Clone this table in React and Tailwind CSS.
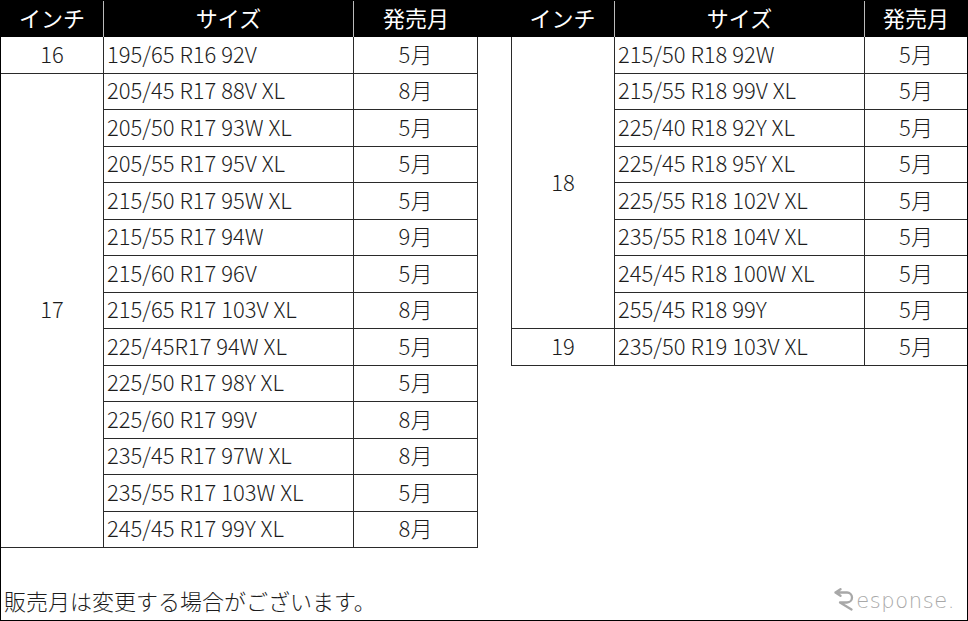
import React from 'react';

const leftRows = [
  ['195/65 R16 92V', '5月'],
  ['205/45 R17 88V XL', '8月'],
  ['205/50 R17 93W XL', '5月'],
  ['205/55 R17 95V XL', '5月'],
  ['215/50 R17 95W XL', '5月'],
  ['215/55 R17 94W', '9月'],
  ['215/60 R17 96V', '5月'],
  ['215/65 R17 103V XL', '8月'],
  ['225/45R17 94W XL', '5月'],
  ['225/50 R17 98Y XL', '5月'],
  ['225/60 R17 99V', '8月'],
  ['235/45 R17 97W XL', '8月'],
  ['235/55 R17 103W XL', '5月'],
  ['245/45 R17 99Y XL', '8月'],
];

const rightRows = [
  ['215/50 R18 92W', '5月'],
  ['215/55 R18 99V XL', '5月'],
  ['225/40 R18 92Y XL', '5月'],
  ['225/45 R18 95Y XL', '5月'],
  ['225/55 R18 102V XL', '5月'],
  ['235/55 R18 104V XL', '5月'],
  ['245/45 R18 100W XL', '5月'],
  ['255/45 R18 99Y', '5月'],
  ['235/50 R19 103V XL', '5月'],
];

const cell = 'border-r border-b border-[#2a2a2a] flex items-center pb-[4px]';
const head = 'bg-black text-white flex items-center justify-center font-normal pb-[4px]';

function ResponseLogo() {
  return (
    <div className="flex items-end text-[#a8a8a8] mr-[12px] mb-[8px]">
      <svg width="22" height="23" viewBox="0 0 22 23" className="mb-[1px]">
        <path d="M1.5 4.5 L6.5 1.2 M1.5 4.5 L6.5 7.8 M1.5 4.5 H13 A5 5 0 0 1 13 14.5 H6 L17.5 21.5" fill="none" stroke="#a8a8a8" strokeWidth="2.3" strokeLinecap="round" strokeLinejoin="round" />
      </svg>
      <span className="text-[21px] leading-none tracking-[0.6px]" style={{ fontFamily: '"DejaVu Sans", sans-serif', fontWeight: 300 }}>esponse.</span>
    </div>
  );
}

export default function App() {
  return (
    <div
      className="w-[968px] h-[621px] bg-white border border-black flex flex-col text-[22px] text-[#1c1c1c] leading-none font-light"
      style={{ fontFamily: '"Noto Sans CJK JP", "Noto Sans", sans-serif' }}
    >
      <div className="flex">
        {/* left table */}
        <div className="w-[477px] grid grid-cols-[103px_250px_124px] grid-rows-[36px_repeat(14,36.5px)]">
          <div className={`${head} border-r border-[#bbbbbb]`}>インチ</div>
          <div className={`${head} border-r border-[#bbbbbb]`}>サイズ</div>
          <div className={head}>発売月</div>
          <div className={`${cell} justify-center`}>16</div>
          <div className={`${cell} pl-[3px]`}>{leftRows[0][0]}</div>
          <div className={`${cell} justify-center`}>{leftRows[0][1]}</div>
          <div className={`${cell} justify-center col-start-1`} style={{ gridRow: '3 / span 13' }}>17</div>
          {leftRows.slice(1).map(([size, month]) => (
            <React.Fragment key={size}>
              <div className={`${cell} pl-[3px] col-start-2`}>{size}</div>
              <div className={`${cell} justify-center col-start-3`}>{month}</div>
            </React.Fragment>
          ))}
        </div>

        {/* gap */}
        <div className="w-[33px] h-[36px] bg-black" />

        {/* right table */}
        <div className="w-[456px] self-start">
          <div className="grid grid-cols-[104px_250px_102px] grid-rows-[36px_repeat(9,36.5px)]">
            <div className={`${head} border-r border-[#bbbbbb]`}>インチ</div>
            <div className={`${head} border-r border-[#bbbbbb]`}>サイズ</div>
            <div className={head}>発売月</div>
            <div className={`${cell} border-l justify-center col-start-1`} style={{ gridRow: '2 / span 8' }}>18</div>
            {rightRows.slice(0, 8).map(([size, month]) => (
              <React.Fragment key={size}>
                <div className={`${cell} pl-[3px] col-start-2`}>{size}</div>
                <div className="border-b border-[#2a2a2a] flex items-center justify-center col-start-3 pb-[4px]">{month}</div>
              </React.Fragment>
            ))}
            <div className={`${cell} border-l justify-center col-start-1`}>19</div>
            <div className={`${cell} pl-[3px]`}>{rightRows[8][0]}</div>
            <div className="border-b border-[#2a2a2a] flex items-center justify-center pb-[4px]">{rightRows[8][1]}</div>
          </div>
        </div>
      </div>

      <div className="mt-auto flex items-end justify-between">
        <div className="pl-[3px] pb-[9px]">販売月は変更する場合がございます。</div>
        <ResponseLogo />
      </div>
    </div>
  );
}
